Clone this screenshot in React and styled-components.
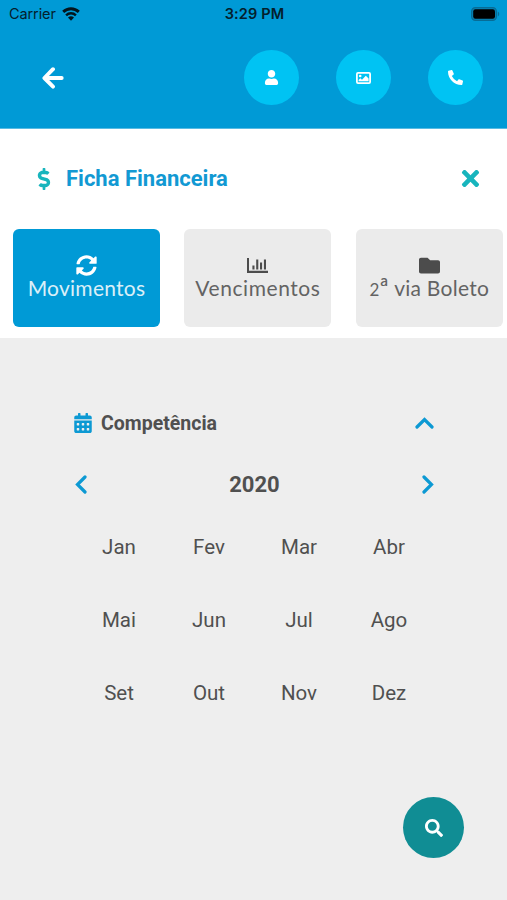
import React from "react";

import styled, { createGlobalStyle } from "styled-components";
import {
  FaCalendarAlt,
  FaDollarSign,
  FaFolder,
  FaPhoneAlt,
  FaSearch,
  FaSyncAlt,
  FaTimes,
  FaUser,
} from "react-icons/fa";

const months = [
  "Jan",
  "Fev",
  "Mar",
  "Abr",
  "Mai",
  "Jun",
  "Jul",
  "Ago",
  "Set",
  "Out",
  "Nov",
  "Dez",
];

const App = () => {
  return (
    <Wrapper>
      <GlobalStyle />
      <Header>
        <StatusBar>
          <Carrier>
            <span>Carrier</span>
            <Wifi />
          </Carrier>
          <Clock>3:29 PM</Clock>
          <BatteryWrapper>
            <Battery />
          </BatteryWrapper>
        </StatusBar>
        <NavBar>
          <BackButton aria-label="Voltar">
            <BackArrow />
          </BackButton>
          <Actions>
            <RoundButton aria-label="Perfil">
              <FaUser size={15} />
            </RoundButton>
            <RoundButton aria-label="Imagem">
              <Picture />
            </RoundButton>
            <RoundButton aria-label="Telefone">
              <FaPhoneAlt size={15} />
            </RoundButton>
          </Actions>
        </NavBar>
      </Header>
      <Panel>
        <TitleRow>
          <FaDollarSign size={22} />
          <Title>Ficha Financeira</Title>
          <FaTimes size={25} />
        </TitleRow>
        <Tabs>
          <Tab $active>
            <FaSyncAlt size={21} />
            <TabLabel $spacing="0.26px">Movimentos</TabLabel>
          </Tab>
          <Tab>
            <BarChart />
            <TabLabel $spacing="0.56px">Vencimentos</TabLabel>
          </Tab>
          <Tab>
            <FaFolder size={21} />
            <TabLabel $spacing="0.25px">
              <OldStyle>2</OldStyle>
              <Ordinal>ª</Ordinal> via Boleto
            </TabLabel>
          </Tab>
        </Tabs>
      </Panel>
      <Content>
        <FieldRow>
          <FaCalendarAlt size={20} />
          <FieldName>Competência</FieldName>
          <Chevron width="19" height="12" points="2,10 9.5,2.5 17,10" />
        </FieldRow>
        <YearRow>
          <Chevron width="12" height="19" points="10,2 2.5,9.5 10,17" />
          <Year>2020</Year>
          <Chevron width="12" height="19" points="2,2 9.5,9.5 2,17" />
        </YearRow>
        <MonthGrid>
          {months.map((month) => (
            <Month key={month}>{month}</Month>
          ))}
        </MonthGrid>
        <SearchButton aria-label="Pesquisar">
          <FaSearch size={18} />
        </SearchButton>
      </Content>
    </Wrapper>
  );
};

const Chevron = ({ width, height, points }) => (
  <svg width={width} height={height} fill="none">
    <polyline
      points={points}
      stroke="#0c99d3"
      strokeWidth="3.2"
      strokeLinecap="round"
    />
  </svg>
);

const BackArrow = () => (
  <svg width="22" height="22" fill="none">
    <path
      d="M11 2.2L2.4 11l8.6 8.6M3 11h16.7"
      stroke="#ffffff"
      strokeWidth="3.9"
      strokeLinecap="round"
      strokeLinejoin="round"
    />
  </svg>
);

const Picture = () => (
  <svg width="15" height="12" viewBox="0 0 15 12" fill="none">
    <rect x="0.9" y="0.9" width="13.2" height="10.2" rx="1.1" stroke="#ffffff" strokeWidth="1.8" />
    <circle cx="4.2" cy="4" r="1.3" fill="#ffffff" />
    <path d="M2.6 9.2V7.9l1.7-1.7 1.7 1.5 3.8-3.9 2.8 2.8v2.6z" fill="#ffffff" />
  </svg>
);

const BarChart = () => (
  <svg width="21" height="21" viewBox="0 0 21 21">
    <path
      d="M0 3h2v12.8h19V18H0zM5.4 10.4h2.1v4H5.4zM9.2 4.6h2.1v9.8H9.2zM13 7.6h2.1v6.8H13zM16.9 4.6H19v9.8h-2.1z"
      fill="currentColor"
    />
  </svg>
);

const Wifi = () => (
  <svg width="18" height="14" viewBox="0 0 18 14" fill="none">
    <path d="M1.2 4.9a11.3 11.3 0 0 1 15.6 0" stroke="#03151d" strokeWidth="2.9" />
    <path d="M4.1 8.3a7 7 0 0 1 9.8 0" stroke="#03151d" strokeWidth="2.4" />
    <path d="M9 13.7l-3-3.1a4.3 4.3 0 0 1 6 0z" fill="#03151d" />
  </svg>
);

const Battery = () => (
  <svg width="29" height="14" viewBox="0 0 29 14">
    <rect x="0.6" y="0.6" width="24.8" height="12.8" rx="3.8" fill="#0783b4" stroke="#076c96" strokeWidth="1.2" />
    <rect x="2.2" y="2.3" width="21.8" height="9.4" rx="2.2" fill="#000" />
    <path d="M26.8 4.6a2.7 2.7 0 0 1 0 4.8z" fill="#076c96" />
  </svg>
);

const GlobalStyle = createGlobalStyle`
  * {
    box-sizing: border-box;
  }
  body {
    margin: 0;
    overflow: hidden;
  }
  button {
    border: none;
    padding: 0;
    cursor: pointer;
  }
  svg {
    display: block;
    flex-shrink: 0;
  }
`;

const Wrapper = styled.div`
  display: flex;
  flex-direction: column;
  width: 507px;
  height: 900px;
  background-color: #eeeeee;
  font-family: "Roboto", sans-serif;
  color: #505050;
`;

const Header = styled.header`
  height: 129px;
  background-color: #009ad6;
  border-bottom: 1px solid #58bbe3;
`;

const StatusBar = styled.div`
  display: grid;
  grid-template-columns: 1fr auto 1fr;
  align-items: center;
  height: 27px;
  padding: 0 7px 0 9px;
  font-family: "Inter", sans-serif;
  font-size: 14.5px;
  color: #04202c;
`;

const Carrier = styled.div`
  display: flex;
  align-items: center;
  gap: 6px;
  letter-spacing: -0.1px;
`;

const Clock = styled.div`
  font-weight: 600;
  letter-spacing: 0.15px;
`;

const BatteryWrapper = styled.div`
  display: flex;
  justify-content: flex-end;
`;

const NavBar = styled.div`
  display: flex;
  align-items: center;
  justify-content: space-between;
  margin-top: 23px;
  padding: 0 24.5px 0 42px;
`;

const BackButton = styled.button`
  background: none;
  color: #ffffff;
`;

const Actions = styled.div`
  display: flex;
  gap: 36.7px;
`;

const RoundButton = styled.button`
  display: flex;
  align-items: center;
  justify-content: center;
  width: 55px;
  height: 55px;
  border-radius: 50%;
  background-color: #00c3f3;
  color: #ffffff;
`;

const Panel = styled.section`
  height: 209px;
  background-color: #ffffff;
`;

const TitleRow = styled.div`
  display: flex;
  align-items: center;
  height: 99.5px;
  padding: 0 24px 0 33px;
  color: #18b5bd;
`;

const Title = styled.h1`
  flex: 1;
  margin: 0 0 0 11px;
  font-size: 22px;
  font-weight: 700;
  color: #1299d3;
`;

const Tabs = styled.div`
  display: flex;
  gap: 24.4px;
  padding-left: 13px;
`;

const Tab = styled.button`
  display: flex;
  flex-direction: column;
  align-items: center;
  width: 147px;
  height: 98px;
  padding-top: 26.5px;
  border-radius: 6px;
  background-color: ${(props) => (props.$active ? "#009ad6" : "#ebebeb")};
  color: ${(props) => (props.$active ? "#ffffff" : "#4c4c4c")};
`;

const TabLabel = styled.span`
  font-family: "Lato", sans-serif;
  font-size: 21px;
  font-weight: 400;
  line-height: 24px;
  letter-spacing: ${(props) => props.$spacing};
  white-space: nowrap;
  opacity: 0.85;
`;

const OldStyle = styled.span`
  font-size: 17px;
`;

const Ordinal = styled.span`
  font-size: 25px;
  line-height: 1px;
`;

const Content = styled.main`
  display: flex;
  flex: 1;
  flex-direction: column;
  padding: 70px 73px 0 73px;
`;

const FieldRow = styled.div`
  display: flex;
  align-items: center;
  height: 30px;
  color: #0c99d3;
`;

const FieldName = styled.h2`
  flex: 1;
  margin: 0 0 0 8px;
  font-size: 19.5px;
  font-weight: 700;
  color: #505050;
`;

const YearRow = styled.div`
  display: flex;
  align-items: center;
  justify-content: space-between;
  height: 30px;
  margin-top: 31px;
  padding: 0 0 0 2px;
`;

const Year = styled.div`
  font-size: 22px;
  font-weight: 700;
  color: #505050;
`;

const MonthGrid = styled.div`
  display: grid;
  grid-template-columns: repeat(4, 90px);
  grid-auto-rows: 73px;
  align-items: center;
  margin: 11px 0 0 1px;
`;

const Month = styled.div`
  font-size: 20.5px;
  text-align: center;
`;

const SearchButton = styled.button`
  display: flex;
  align-self: flex-end;
  align-items: center;
  justify-content: center;
  width: 61px;
  height: 61px;
  margin: 68px -30px 0 0;
  border-radius: 50%;
  background-color: #108d94;
  color: #ffffff;
`;

export default App;
